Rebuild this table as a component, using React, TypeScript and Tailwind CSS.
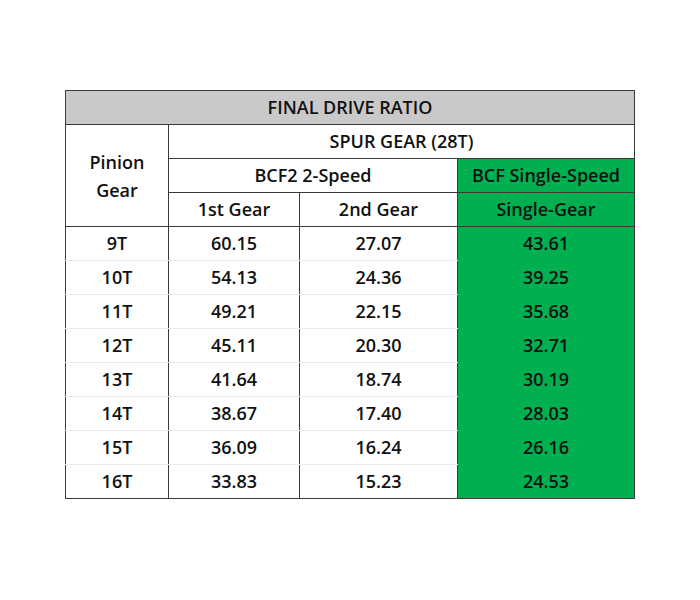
const rows = [
  ['9T', '60.15', '27.07', '43.61'],
  ['10T', '54.13', '24.36', '39.25'],
  ['11T', '49.21', '22.15', '35.68'],
  ['12T', '45.11', '20.30', '32.71'],
  ['13T', '41.64', '18.74', '30.19'],
  ['14T', '38.67', '17.40', '28.03'],
  ['15T', '36.09', '16.24', '26.16'],
  ['16T', '33.83', '15.23', '24.53'],
];

export default function App() {
  const head = 'h-[34px] border border-[#3a3a3a] text-center font-semibold p-0';
  const cell = 'border-x border-[#3a3a3a] text-center p-0';
  return (
    <div className="min-h-[600px] w-[700px] bg-white pt-[90px] font-['Open_Sans',sans-serif] text-[18px] font-semibold text-[#111]">
      <table className="mx-auto w-[569px] table-fixed border-collapse border border-[#3a3a3a]">
        <colgroup>
          <col className="w-[103px]" />
          <col className="w-[131px]" />
          <col className="w-[158px]" />
          <col className="w-[177px]" />
        </colgroup>
        <thead>
          <tr>
            <th colSpan={4} className={`${head} bg-[#c9c9c9]`}>
              FINAL DRIVE RATIO
            </th>
          </tr>
          <tr>
            <th rowSpan={3} className={`${head} leading-[28px]`}>
              Pinion
              <br />
              Gear
            </th>
            <th colSpan={3} className={head}>
              SPUR GEAR (28T)
            </th>
          </tr>
          <tr>
            <th colSpan={2} className={head}>
              BCF2 2-Speed
            </th>
            <th className={`${head} bg-[#00b050]`}>BCF Single-Speed</th>
          </tr>
          <tr>
            <th className={head}>1st Gear</th>
            <th className={head}>2nd Gear</th>
            <th className={`${head} bg-[#00b050]`}>Single-Gear</th>
          </tr>
        </thead>
        <tbody>
          {rows.map((r, i) => {
            const line = i < rows.length - 1 ? 'border-b border-b-[#ececec]' : '';
            return (
              <tr key={r[0]} className="h-[34px]">
                <td className={`${cell} ${line}`}>{r[0]}</td>
                <td className={`${cell} ${line}`}>{r[1]}</td>
                <td className={`${cell} ${line}`}>{r[2]}</td>
                <td className={`${cell} bg-[#00b050]`}>{r[3]}</td>
              </tr>
            );
          })}
        </tbody>
      </table>
    </div>
  );
}
